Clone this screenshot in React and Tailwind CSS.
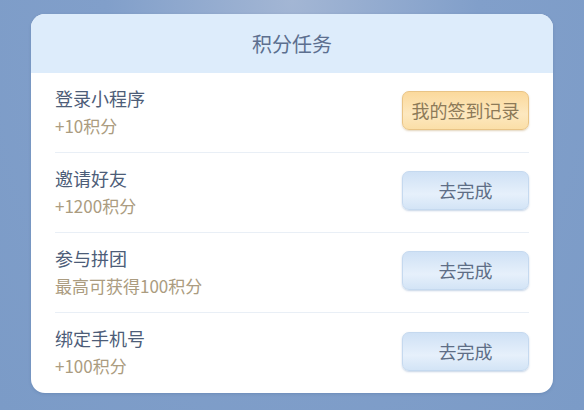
export default function App() {
  const tasks = [
    { title: "登录小程序", sub: "+10积分", btn: "我的签到记录", gold: true },
    { title: "邀请好友", sub: "+1200积分", btn: "去完成" },
    { title: "参与拼团", sub: "最高可获得100积分", btn: "去完成" },
    { title: "绑定手机号", sub: "+100积分", btn: "去完成" },
  ];
  return (
    <div
      className="w-[584px] h-[410px] overflow-hidden pt-[14px] pl-[31px] bg-[radial-gradient(ellipse_at_50%_0%,#a3b6d4_0%,#819fca_45%,#7b9bc7_100%)]"
      style={{ fontFamily: '"Noto Sans CJK SC", "Noto Sans", sans-serif' }}
    >
      <div className="w-[522px] h-[379px] rounded-[14px] bg-white overflow-hidden shadow-[0_1px_3px_rgba(60,90,140,0.25)]">
        <div className="h-[59px] bg-[#ddecfb] flex items-center justify-center text-[20px] text-[#5c6f8f]">
          积分任务
        </div>
        <div className="px-[24px]">
          {tasks.map((t, i) => (
            <div
              key={i}
              className={`h-[80px] flex items-center justify-between ${i < 3 ? "border-b border-[#e9eff6]" : ""}`}
            >
              <div className="flex flex-col pb-[2px]">
                <div className="text-[18px] leading-[27px] text-[#4d5d78]">{t.title}</div>
                <div className="text-[17px] leading-[27px] text-[#ab9c80]">{t.sub}</div>
              </div>
              <div
                className={
                  t.gold
                    ? "w-[127px] h-[39px] mb-[4px] rounded-[7px] flex items-center justify-center text-[18px] text-[#8d7a58] border border-[#e9c486] bg-[linear-gradient(180deg,#fbd99c_0%,#fde8bf_60%,#fbdfa8_100%)] shadow-[0_1px_2px_rgba(170,130,60,0.35)]"
                    : "w-[127px] h-[39px] mb-[4px] rounded-[7px] flex items-center justify-center text-[18px] text-[#5e6e86] border border-[#c5d9ef] bg-[linear-gradient(180deg,#cfe1f5_0%,#e6f0fb_60%,#d3e4f6_100%)] shadow-[0_1px_2px_rgba(90,130,180,0.35)]"
                }
              >
                {t.btn}
              </div>
            </div>
          ))}
        </div>
      </div>
    </div>
  );
}
